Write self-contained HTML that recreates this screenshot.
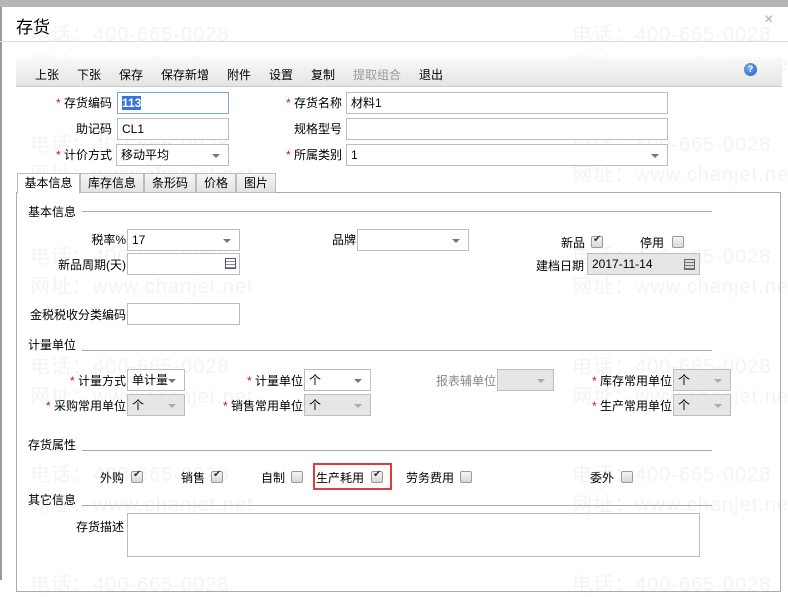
<!DOCTYPE html>
<html><head><meta charset="utf-8"><style>
*{box-sizing:border-box;margin:0;padding:0}
body{width:788px;height:580px;overflow:hidden;background:#fff;position:relative;font-family:"Liberation Sans","Noto Sans CJK SC",sans-serif;font-size:12px;color:#000}
.a{position:absolute;white-space:nowrap}
.wm{position:absolute;color:#f4f4f4;font-size:20px;white-space:nowrap;letter-spacing:1px}
.in{position:absolute;border:1px solid #bdbdbd;background:#fff;height:22px;padding:2px 4px;line-height:16px}
.dis{background:#e6e6e6}
.sel::after{content:"";position:absolute;right:8px;top:9px;border-left:4px solid transparent;border-right:4px solid transparent;border-top:4px solid #777}
.dis.sel::after{border-top-color:#aaa}
.lb{position:absolute;text-align:right;white-space:nowrap;line-height:16px}
.r{color:#c0143c}
.cb{position:absolute;width:12px;height:12px;border:1px solid #999;border-radius:2px;background:linear-gradient(#f4f4f4,#d8d8d8)}
.cb.c::after{content:"✔";position:absolute;left:1px;top:-3px;font-size:10px;color:#333}
.hd{position:absolute;left:28px;line-height:14px}
.ln{position:absolute;left:82px;width:630px;height:1px;background:#aaa}
.tab{position:absolute;top:173px;height:20px;border:1px solid #bbb;background:linear-gradient(#f6f6f6,#e2e2e2);text-align:center;line-height:18px;font-size:12px}
</style></head><body>
<div class="a" style="left:0;top:0;width:788px;height:7px;background:#b5b5b5"></div>
<div class="a" style="left:0;top:7px;width:2px;height:573px;background:#999"></div>
<div class="wm" style="left:30px;top:18px">电话：400-665-0028</div><div class="wm" style="left:572px;top:18px">电话：400-665-0028</div>
<div class="wm" style="left:30px;top:48px">网址：www.chanjet.net</div><div class="wm" style="left:572px;top:48px">网址：www.chanjet.net</div>
<div class="wm" style="left:30px;top:128px">电话：400-665-0028</div><div class="wm" style="left:572px;top:128px">电话：400-665-0028</div>
<div class="wm" style="left:30px;top:158px">网址：www.chanjet.net</div><div class="wm" style="left:572px;top:158px">网址：www.chanjet.net</div>
<div class="wm" style="left:30px;top:240px">电话：400-665-0028</div><div class="wm" style="left:572px;top:240px">电话：400-665-0028</div>
<div class="wm" style="left:30px;top:270px">网址：www.chanjet.net</div><div class="wm" style="left:572px;top:270px">网址：www.chanjet.net</div>
<div class="wm" style="left:30px;top:350px">电话：400-665-0028</div><div class="wm" style="left:572px;top:350px">电话：400-665-0028</div>
<div class="wm" style="left:30px;top:380px">网址：www.chanjet.net</div><div class="wm" style="left:572px;top:380px">网址：www.chanjet.net</div>
<div class="wm" style="left:30px;top:458px">电话：400-665-0028</div><div class="wm" style="left:572px;top:458px">电话：400-665-0028</div>
<div class="wm" style="left:30px;top:488px">网址：www.chanjet.net</div><div class="wm" style="left:572px;top:488px">网址：www.chanjet.net</div>
<div class="wm" style="left:30px;top:568px">电话：400-665-0028</div><div class="wm" style="left:572px;top:568px">电话：400-665-0028</div>

<div class="a" style="left:16px;top:13px;font-size:17px">存货</div>
<div class="a" style="left:764px;top:11px;font-size:16px;color:#aaa">×</div>
<div class="a" style="left:0;top:41px;width:788px;height:1px;background:#ddd"></div>
<div class="a" style="left:16px;top:57px;width:766px;height:30px;background:linear-gradient(#fafafa,#e4e4e4);border-bottom:1px solid #ccc"></div>
<div class="a" style="left:35px;top:66px">上张</div>
<div class="a" style="left:77px;top:66px">下张</div>
<div class="a" style="left:119px;top:66px">保存</div>
<div class="a" style="left:161px;top:66px">保存新增</div>
<div class="a" style="left:227px;top:66px">附件</div>
<div class="a" style="left:269px;top:66px">设置</div>
<div class="a" style="left:311px;top:66px">复制</div>
<div class="a" style="left:353px;top:66px;color:#999">提取组合</div>
<div class="a" style="left:419px;top:66px">退出</div>
<div class="a" style="left:744px;top:63px;width:13px;height:13px;border-radius:50%;background:radial-gradient(circle at 40% 35%,#7ab0f0,#1c56b8);color:#fff;font-size:9px;font-weight:bold;text-align:center;line-height:13px">?</div>

<div class="lb" style="left:40px;top:95px;width:72px"><span class="r">*</span> 存货编码</div>
<div class="in" style="left:117px;top:92px;width:112px;border-color:#7aa7d8"><span style="background:#3875d7;color:#fff;font-weight:bold">113</span></div>
<div class="lb" style="left:40px;top:121px;width:72px">助记码</div>
<div class="in" style="left:117px;top:118px;width:112px">CL1</div>
<div class="lb" style="left:40px;top:147px;width:72px"><span class="r">*</span> 计价方式</div>
<div class="in sel" style="left:116px;top:144px;width:113px">移动平均</div>
<div class="lb" style="left:270px;top:95px;width:72px"><span class="r">*</span> 存货名称</div>
<div class="in" style="left:346px;top:92px;width:322px">材料1</div>
<div class="lb" style="left:270px;top:121px;width:72px">规格型号</div>
<div class="in" style="left:346px;top:118px;width:322px"></div>
<div class="lb" style="left:270px;top:147px;width:72px"><span class="r">*</span> 所属类别</div>
<div class="in sel" style="left:346px;top:144px;width:322px">1</div>

<div class="a" style="left:16px;top:192px;width:765px;height:400px;border:1px solid #aaa"></div>
<div class="tab" style="left:17px;width:63px;background:#fff;border-bottom-color:#fff;height:21px">基本信息</div>
<div class="tab" style="left:80px;width:64px">库存信息</div>
<div class="tab" style="left:144px;width:52px">条形码</div>
<div class="tab" style="left:196px;width:40px">价格</div>
<div class="tab" style="left:236px;width:40px">图片</div>

<div class="hd" style="top:205px">基本信息</div><div class="ln" style="top:211px"></div>
<div class="lb" style="left:60px;top:232px;width:66px">税率%</div>
<div class="in sel" style="left:127px;top:229px;width:113px">17</div>
<div class="lb" style="left:40px;top:257px;width:86px">新品周期(天)</div>
<div class="in" style="left:127px;top:253px;width:113px"><span style="position:absolute;right:3px;top:4px;width:11px;height:11px;border:1px solid #557;background:repeating-linear-gradient(#fff 0 2px,#7a8ab8 2px 3px)"></span></div>
<div class="lb" style="left:300px;top:232px;width:56px">品牌</div>
<div class="in sel" style="left:357px;top:229px;width:112px"></div>
<div class="a" style="left:561px;top:234px">新品</div><div class="cb c" style="left:591px;top:236px"></div>
<div class="a" style="left:640px;top:234px">停用</div><div class="cb" style="left:672px;top:236px"></div>
<div class="a" style="left:536px;top:257px">建档日期</div>
<div class="in dis" style="left:587px;top:253px;width:113px">2017-11-14<span style="position:absolute;right:4px;top:5px;width:11px;height:11px;border:1px solid #666;background:repeating-linear-gradient(#ddd 0 2px,#777 2px 3px)"></span></div>
<div class="lb" style="left:20px;top:307px;width:106px">金税税收分类编码</div>
<div class="in" style="left:127px;top:303px;width:113px"></div>

<div class="hd" style="top:338px">计量单位</div><div class="ln" style="top:350px"></div>
<div class="lb" style="left:40px;top:373px;width:86px"><span class="r">*</span> 计量方式</div>
<div class="in sel" style="left:127px;top:369px;width:58px">单计量</div>
<div class="lb" style="left:200px;top:373px;width:103px"><span class="r">*</span> 计量单位</div>
<div class="in sel" style="left:304px;top:369px;width:67px">个</div>
<div class="lb" style="left:400px;top:373px;width:96px;color:#888">报表辅单位</div>
<div class="in sel dis" style="left:497px;top:369px;width:57px"></div>
<div class="lb" style="left:560px;top:373px;width:112px"><span class="r">*</span> 库存常用单位</div>
<div class="in sel dis" style="left:673px;top:369px;width:58px">个</div>
<div class="lb" style="left:30px;top:398px;width:96px"><span class="r">*</span> 采购常用单位</div>
<div class="in sel dis" style="left:127px;top:394px;width:58px">个</div>
<div class="lb" style="left:200px;top:398px;width:103px"><span class="r">*</span> 销售常用单位</div>
<div class="in sel dis" style="left:304px;top:394px;width:67px">个</div>
<div class="lb" style="left:560px;top:398px;width:112px"><span class="r">*</span> 生产常用单位</div>
<div class="in sel dis" style="left:673px;top:394px;width:58px">个</div>

<div class="hd" style="top:438px">存货属性</div><div class="ln" style="top:450px"></div>
<div class="a" style="left:100px;top:469px">外购</div><div class="cb c" style="left:131px;top:471px"></div>
<div class="a" style="left:181px;top:469px">销售</div><div class="cb c" style="left:211px;top:471px"></div>
<div class="a" style="left:261px;top:469px">自制</div><div class="cb" style="left:291px;top:471px"></div>
<div class="a" style="left:313px;top:463px;width:79px;height:27px;border:2px solid #e03a3a"></div>
<div class="a" style="left:316px;top:469px">生产耗用</div><div class="cb c" style="left:371px;top:471px"></div>
<div class="a" style="left:406px;top:469px">劳务费用</div><div class="cb" style="left:460px;top:471px"></div>
<div class="a" style="left:590px;top:469px">委外</div><div class="cb" style="left:621px;top:471px"></div>

<div class="hd" style="top:493px">其它信息</div><div class="ln" style="top:505px"></div>
<div class="a" style="left:76px;top:518px">存货描述</div>
<div class="in" style="left:127px;top:513px;width:573px;height:44px"></div>
</body></html>
